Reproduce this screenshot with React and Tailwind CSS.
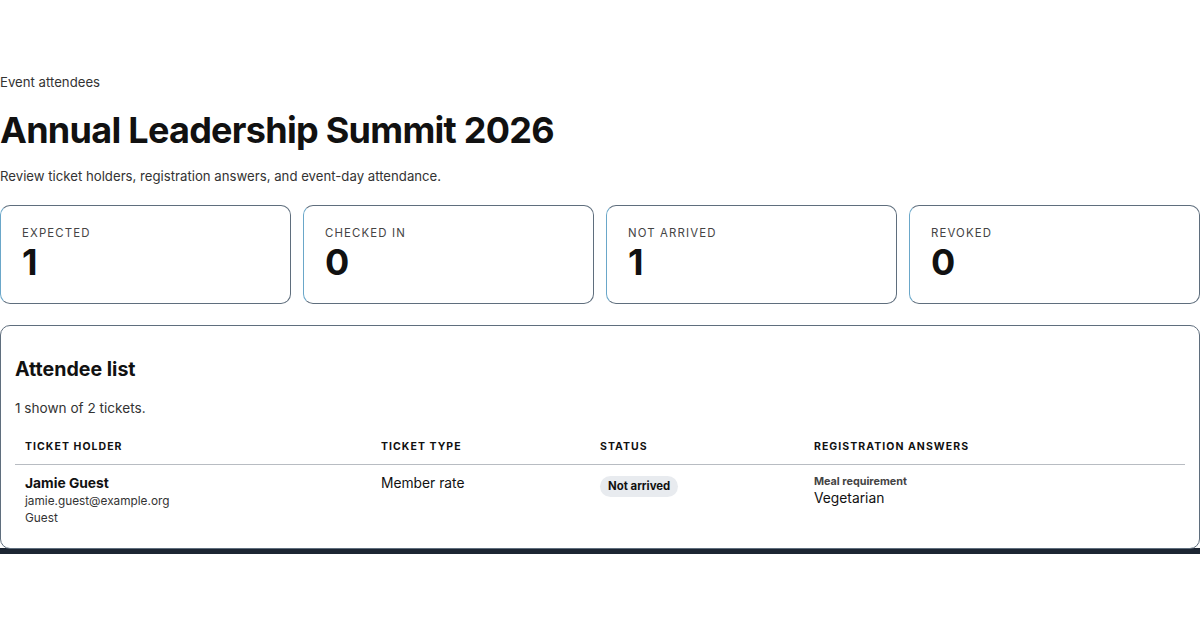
export default function App() {
  const stats = [
    { label: "EXPECTED", value: "1" },
    { label: "CHECKED IN", value: "0" },
    { label: "NOT ARRIVED", value: "1" },
    { label: "REVOKED", value: "0" },
  ];
  return (
    <div className="w-[1200px] h-[630px] bg-white text-[#111] overflow-hidden" style={{ fontFamily: "Inter, 'Noto Sans', sans-serif" }}>
      <div className="pt-[72px]">
        <p className="text-[13.2px] leading-[20px] text-[#333]">Event attendees</p>
        <h1 className="mt-[18px] text-[36px] leading-[40px] font-bold tracking-[-0.02em] text-[#111]">Annual Leadership Summit 2026</h1>
        <p className="mt-[16px] text-[13.2px] leading-[20px] text-[#333]">Review ticket holders, registration answers, and event-day attendance.</p>
        <div className="mt-[19px] grid grid-cols-4 gap-[12px]">
          {stats.map((s) => (
            <div key={s.label} className="h-[99px] rounded-[10px] border border-[#5f6e7d] border-l-[#6aa7c9] px-[21px] pt-[19px]">
              <div className="text-[11.4px] leading-[16px] tracking-[0.1em] text-[#444]">{s.label}</div>
              <div className="mt-[1px] text-[36px] leading-[40px] font-bold text-[#111]">{s.value}</div>
            </div>
          ))}
        </div>
        <div className="mt-[21px] rounded-[10px] border border-[#5f6e7d] px-[14px] pt-[29px] pb-[13px] relative z-10">
          <h2 className="text-[19.6px] leading-[28px] font-bold text-[#111]">Attendee list</h2>
          <p className="mt-[15px] text-[13.6px] leading-[20px] text-[#333]">1 shown of 2 tickets.</p>
          <table className="mt-[11px] w-full border-collapse text-left">
            <thead>
              <tr className="border-b border-[#b8bcc2]">
                <th className="w-[356px] px-[10px] pt-[10px] pb-[9px] text-[10.5px] leading-[16px] font-bold tracking-[0.1em] text-[#111]">TICKET HOLDER</th>
                <th className="w-[219px] px-[10px] pt-[10px] pb-[9px] text-[10.5px] leading-[16px] font-bold tracking-[0.1em] text-[#111]">TICKET TYPE</th>
                <th className="w-[214px] px-[10px] pt-[10px] pb-[9px] text-[10.5px] leading-[16px] font-bold tracking-[0.1em] text-[#111]">STATUS</th>
                <th className="px-[10px] pt-[10px] pb-[9px] text-[10.5px] leading-[16px] font-bold tracking-[0.1em] text-[#111]">REGISTRATION ANSWERS</th>
              </tr>
            </thead>
            <tbody>
              <tr className="align-top">
                <td className="px-[10px] pt-[8px] pb-[8px]">
                  <div className="text-[13.8px] leading-[20px] font-bold text-[#111]">Jamie Guest</div>
                  <div className="text-[11.8px] leading-[17px] text-[#333]">jamie.guest@example.org</div>
                  <div className="text-[11.8px] leading-[17px] text-[#333]">Guest</div>
                </td>
                <td className="px-[10px] pt-[8px] text-[13.8px] leading-[20px] text-[#111]">Member rate</td>
                <td className="px-[10px] pt-[7px]">
                  <span className="inline-block rounded-full bg-[#e8ebef] px-[8px] text-[11.4px] leading-[21px] font-bold text-[#111]">Not arrived</span>
                </td>
                <td className="px-[10px] pt-[10px]">
                  <div className="text-[10.8px] leading-[14px] font-bold text-[#444]">Meal requirement</div>
                  <div className="text-[13.8px] leading-[19px] text-[#111]">Vegetarian</div>
                </td>
              </tr>
            </tbody>
          </table>
        </div>
        <div className="-mt-[1px] h-[6px] bg-[#1c2532]"></div>
      </div>
    </div>
  );
}
